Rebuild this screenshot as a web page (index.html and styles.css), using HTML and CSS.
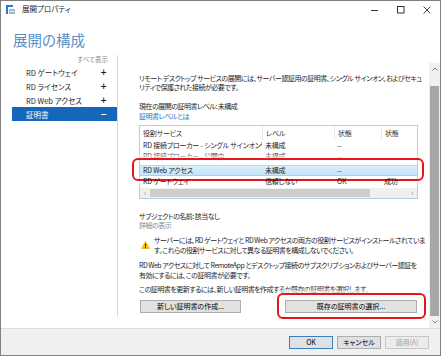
FILE: index.html
```html
<!DOCTYPE html>
<html lang="ja">
<head>
    <meta charset="UTF-8">
    <title>展開プロパティ</title>
    <link rel="stylesheet" href="styles.css">
</head>
<body>
<div class="window">
    <div class="titlebar">
        <svg class="app-icon" viewBox="0 0 9 9">
            <rect x="0" y="0" width="2" height="9" fill="#2b79c9"/>
            <rect x="0" y="0" width="7" height="2" fill="#2b79c9"/>
            <rect x="3" y="4" width="6" height="5" fill="#9fb8d2"/>
            <rect x="4" y="6" width="4" height="1" fill="#e6eef6"/>
        </svg>
        <span class="title">展開プロパティ</span>
        <div class="controls">
            <span class="ctl"><svg width="8" height="8" viewBox="0 0 8 8"><path d="M0 4.5h7" stroke="#333" stroke-width="1"/></svg></span>
            <span class="ctl"><svg width="8" height="8" viewBox="0 0 8 8"><rect x="0.5" y="0.5" width="6.5" height="6.5" fill="none" stroke="#333" stroke-width="1"/></svg></span>
            <span class="ctl"><svg width="8" height="8" viewBox="0 0 8 8"><path d="M0.5 0.5l7 7M7.5 0.5l-7 7" stroke="#333" stroke-width="0.9"/></svg></span>
        </div>
    </div>

    <h1 class="heading">展開の構成</h1>

    <div class="panes">
        <nav class="nav">
            <div class="show-all">すべて表示</div>
            <div class="nav-item"><span>RD ゲートウェイ</span><span class="sign">+</span></div>
            <div class="nav-item"><span>RD ライセンス</span><span class="sign">+</span></div>
            <div class="nav-item"><span>RD Web アクセス</span><span class="sign">+</span></div>
            <div class="nav-item selected"><span>証明書</span><span class="sign">−</span></div>
        </nav>

        <div class="pane">
            <div class="pane-content">
                <p class="intro">リモート デスクトップ サービスの展開には、サーバー認証用の証明書、シングル サインオン、およびセキュ<br>リティで保護された接続が必要です。</p>

                <p class="level">現在の展開の証明書レベル: 未構成</p>
                <a class="link">証明書レベルとは</a>

                <div class="list">
                    <div class="list-row list-head">
                        <span>役割サービス</span><span>レベル</span><span>状態</span><span>状態</span>
                    </div>
                    <div class="list-row">
                        <span>RD 接続ブローカー - シングル サインオン管理</span><span>未構成</span><span>--</span><span></span>
                    </div>
                    <div class="list-row row-tall">
                        <span>RD 接続ブローカー - 公開中</span><span>未構成</span><span>--</span><span></span>
                    </div>
                    <div class="list-row selected">
                        <span>RD Web アクセス</span><span>未構成</span><span>--</span><span></span>
                        <div class="callout callout-row"></div>
                    </div>
                    <div class="list-row">
                        <span>RD ゲートウェイ</span><span>信頼しない</span><span>OK</span><span>成功</span>
                    </div>
                    <div class="hscroll">
                        <span class="harrow">&lsaquo;</span>
                        <span class="hthumb"></span>
                        <span class="harrow">&rsaquo;</span>
                    </div>
                </div>

                <p class="subject">サブジェクトの名前: 該当なし</p>
                <p class="details">詳細の表示</p>

                <div class="warning">
                    <svg class="warn-icon" viewBox="0 0 10 9">
                        <path d="M5 0.3L9.7 8.6H0.3z" fill="#f5c400" stroke="#d9a400" stroke-width="0.5"/>
                        <rect x="4.5" y="3" width="1" height="3.2" fill="#000"/>
                        <rect x="4.5" y="6.9" width="1" height="1" fill="#000"/>
                    </svg>
                    <p>サーバーには、RD ゲートウェイと RD Web アクセスの両方の役割サービスがインストールされていま<br>す。これらの役割サービスに対して異なる証明書を構成しないでください。</p>
                </div>

                <p class="para">RD Web アクセスに対して RemoteApp とデスクトップ接続のサブスクリプションおよびサーバー認証を<br>有効にするには、この証明書が必要です。</p>

                <p class="para update">この証明書を更新するには、新しい証明書を作成するか既存の証明書を選択します。</p>

                <div class="cert-buttons">
                    <button class="btn btn-new">新しい証明書の作成...</button>
                    <button class="btn btn-existing">既存の証明書の選択...
                        <span class="callout callout-btn"></span>
                    </button>
                </div>
            </div>

            <div class="vscroll">
                <span class="varrow"><svg width="6" height="4" viewBox="0 0 6 4"><path d="M0.5 3.5L3 1l2.5 2.5" fill="none" stroke="#606060" stroke-width="0.8"/></svg></span>
                <span class="vgap"></span>
                <span class="vthumb"></span>
                <span class="varrow"><svg width="6" height="4" viewBox="0 0 6 4"><path d="M0.5 0.5L3 3l2.5-2.5" fill="none" stroke="#606060" stroke-width="0.8"/></svg></span>
            </div>
        </div>
    </div>

    <div class="footer">
        <button class="btn btn-footer btn-default">OK</button>
        <button class="btn btn-footer">キャンセル</button>
        <button class="btn btn-footer" disabled>適用(A)</button>
    </div>
</div>
</body>
</html>
```

FILE: styles.css
```css
* {
    box-sizing: border-box;
}

body {
    margin: 0;
    font-family: "Noto Sans CJK JP", "Noto Sans", sans-serif;
    font-feature-settings: "palt";
    color: #1e1e1e;
    background: #ffffff;
}

p {
    margin: 0;
}

.window {
    width: 441px;
    height: 356px;
    border: 1px solid #808080;
    display: flex;
    flex-direction: column;
    background: #ffffff;
    overflow: hidden;
}

/* タイトルバー */
.titlebar {
    height: 26px;
    flex: none;
    display: flex;
    align-items: flex-start;
}

.app-icon {
    width: 9px;
    height: 9px;
    margin: 4px 0 0 5px;
}

.title {
    font-size: 7.5px;
    line-height: 10px;
    margin: 3px 0 0 7px;
    color: #222;
}

.controls {
    margin-left: auto;
    display: flex;
}

.ctl {
    width: 26px;
    height: 18px;
    display: flex;
    align-items: center;
    justify-content: center;
}

.heading {
    margin: 0;
    height: 28px;
    flex: none;
    padding: 3px 0 0 12px;
    font-size: 14.5px;
    line-height: 20px;
    font-weight: 400;
    color: #5b8fc6;
}

.panes {
    flex: 1;
    display: flex;
    min-height: 0;
}

/* 左のナビ */
.nav {
    width: 117px;
    flex: none;
    margin-bottom: 11px;
    border-right: 1px solid #d9d9d9;
    padding-left: 11px;
    font-size: 7.5px;
}

.show-all {
    height: 10px;
    line-height: 8px;
    text-align: right;
    padding-right: 9px;
    color: #8a8a8a;
    font-size: 6.5px;
}

.nav-item {
    height: 14px;
    display: flex;
    align-items: center;
    justify-content: space-between;
    padding: 0 10px 0 14px;
    color: #1e1e1e;
}

.nav-item .sign {
    font-family: "DejaVu Sans", sans-serif;
    font-weight: bold;
    font-size: 8px;
}

.nav-item.selected {
    background: #1467bb;
    color: #ffffff;
}

/* 右のペイン */
.pane {
    flex: 1;
    display: flex;
    margin-top: 8px;
    min-width: 0;
}

.pane-content {
    flex: 1;
    padding: 11px 10px 0 21px;
    font-size: 7px;
    letter-spacing: -0.5px;
    line-height: 10px;
    white-space: nowrap;
    min-width: 0;
}

.intro {
    line-height: 9px;
}

.level {
    margin-top: 9px;
}

.link {
    display: block;
    color: #1f74c4;
}

.list {
    margin-top: 4px;
    border: 1px solid #b4cde6;
    width: 279px;
    letter-spacing: -0.2px;
}

.list-row {
    position: relative;
    display: grid;
    grid-template-columns: 122px 72px 47px 1fr;
    height: 11px;
    line-height: 11px;
}

.list-row span {
    padding: 0 2px 0 3px;
    white-space: nowrap;
    overflow: hidden;
}

.list-head {
    height: 14px;
    line-height: 14px;
    color: #333;
}

.list-head span + span {
    border-left: 1px solid #eaeaea;
}

.row-tall {
    height: 14px;
}

.list-row.selected {
    background: linear-gradient(#d9effc, #c4e5f8);
    border-top: 1px solid #b0daf5;
    border-bottom: 1px solid #a4d2f0;
    line-height: 9px;
}

.hscroll {
    height: 10px;
    background: #f0f0f0;
    display: flex;
    align-items: center;
    margin-top: 1px;
}

.harrow {
    width: 10px;
    text-align: center;
    color: #8a8a8a;
    font-size: 8px;
    line-height: 10px;
}

.hthumb {
    width: 220px;
    height: 8px;
    background: #cdcdcd;
}

.harrow:last-child {
    margin-left: auto;
}

/* 赤い囲み */
.callout {
    position: absolute;
    border: 2px solid #e5161c;
    border-radius: 6px;
    box-shadow: 0 0 3px 3px rgba(255, 255, 255, 0.7);
    pointer-events: none;
}

.callout-row {
    top: -8px;
    bottom: -6px;
    left: -8px;
    right: -7px;
}

.callout-btn {
    top: -8px;
    bottom: -7px;
    left: -9px;
    right: -10px;
}

.subject {
    margin-top: 13px;
    line-height: 9px;
}

.details {
    line-height: 9px;
    color: #8a8a8a;
}

.warning {
    display: flex;
    align-items: center;
    gap: 4px;
    margin-top: 5px;
    padding-left: 2px;
}

.warn-icon {
    width: 9px;
    height: 8px;
    flex: none;
}

.para {
    margin-top: 5px;
}

.update {
    margin-top: 4px;
}

.cert-buttons {
    display: flex;
    gap: 44px;
    margin-top: 6px;
    padding-left: 1px;
}

/* ボタン */
.btn {
    position: relative;
    height: 13px;
    padding: 0;
    font: inherit;
    font-size: 7px;
    letter-spacing: 0;
    line-height: 11px;
    color: #000;
    background: #e1e1e1;
    border: 1px solid #adadad;
}

.btn-new {
    width: 101px;
}

.btn-existing {
    width: 132px;
}

.vscroll {
    width: 11px;
    flex: none;
    background: #f0f0f0;
    display: flex;
    flex-direction: column;
}

.varrow {
    height: 12px;
    display: flex;
    align-items: center;
    justify-content: center;
    flex: none;
}

.vgap {
    height: 11px;
    flex: none;
}

.vthumb {
    flex: 1;
    background: #a6a6a6;
    margin: 0 1px;
}

.footer {
    height: 27px;
    flex: none;
    border-top: 1px solid #dcdcdc;
    background: #f0f0f0;
    display: flex;
    justify-content: flex-end;
    align-items: center;
    gap: 4px;
    padding-right: 11px;
}

.btn-footer {
    width: 44px;
}

.btn-default {
    border-color: #3a7fc0;
}

.btn-footer:disabled {
    color: #a3a3a3;
    background: #ececec;
    border-color: #c8c8c8;
}
```
